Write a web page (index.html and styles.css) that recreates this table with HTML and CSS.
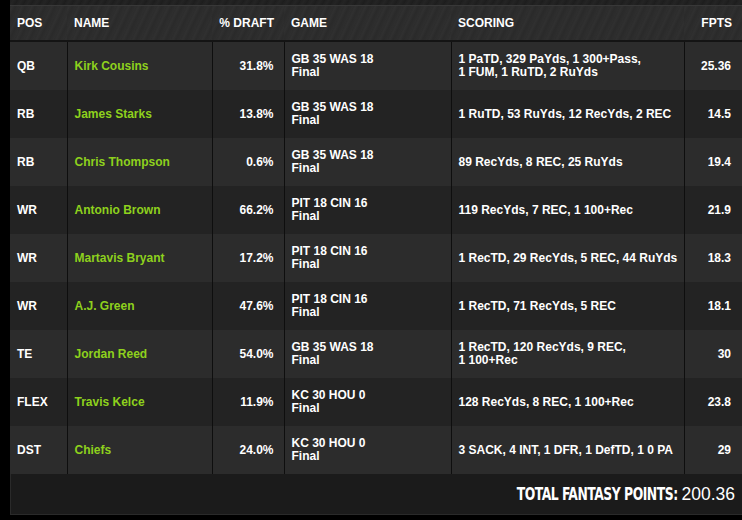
FILE: index.html
```html
<!DOCTYPE html>
<html lang="en">
<head>
    <meta charset="UTF-8">
    <title>Lineup Results</title>
    <link rel="stylesheet" href="styles.css">
</head>
<body>

    <div class="panel">
        <div class="panel-top"></div>
        <table class="lineup">
            <colgroup>
                <col class="col-pos">
                <col class="col-name">
                <col class="col-draft">
                <col class="col-game">
                <col class="col-scoring">
                <col class="col-fpts">
            </colgroup>
            <thead>
                <tr>
                    <th>POS</th>
                    <th>NAME</th>
                    <th class="num">% DRAFT</th>
                    <th>GAME</th>
                    <th>SCORING</th>
                    <th class="num">FPTS</th>
                </tr>
            </thead>
            <tbody>
                <tr>
                    <td>QB</td>
                    <td class="player">Kirk Cousins</td>
                    <td class="num">31.8%</td>
                    <td>GB 35 WAS 18<br>Final</td>
                    <td>1 PaTD, 329 PaYds, 1 300+Pass,<br>1 FUM, 1 RuTD, 2 RuYds</td>
                    <td class="num">25.36</td>
                </tr>
                <tr>
                    <td>RB</td>
                    <td class="player">James Starks</td>
                    <td class="num">13.8%</td>
                    <td>GB 35 WAS 18<br>Final</td>
                    <td>1 RuTD, 53 RuYds, 12 RecYds, 2 REC</td>
                    <td class="num">14.5</td>
                </tr>
                <tr>
                    <td>RB</td>
                    <td class="player">Chris Thompson</td>
                    <td class="num">0.6%</td>
                    <td>GB 35 WAS 18<br>Final</td>
                    <td>89 RecYds, 8 REC, 25 RuYds</td>
                    <td class="num">19.4</td>
                </tr>
                <tr>
                    <td>WR</td>
                    <td class="player">Antonio Brown</td>
                    <td class="num">66.2%</td>
                    <td>PIT 18 CIN 16<br>Final</td>
                    <td>119 RecYds, 7 REC, 1 100+Rec</td>
                    <td class="num">21.9</td>
                </tr>
                <tr>
                    <td>WR</td>
                    <td class="player">Martavis Bryant</td>
                    <td class="num">17.2%</td>
                    <td>PIT 18 CIN 16<br>Final</td>
                    <td>1 RecTD, 29 RecYds, 5 REC, 44 RuYds</td>
                    <td class="num">18.3</td>
                </tr>
                <tr>
                    <td>WR</td>
                    <td class="player">A.J. Green</td>
                    <td class="num">47.6%</td>
                    <td>PIT 18 CIN 16<br>Final</td>
                    <td>1 RecTD, 71 RecYds, 5 REC</td>
                    <td class="num">18.1</td>
                </tr>
                <tr>
                    <td>TE</td>
                    <td class="player">Jordan Reed</td>
                    <td class="num">54.0%</td>
                    <td>GB 35 WAS 18<br>Final</td>
                    <td>1 RecTD, 120 RecYds, 9 REC,<br>1 100+Rec</td>
                    <td class="num">30</td>
                </tr>
                <tr>
                    <td>FLEX</td>
                    <td class="player">Travis Kelce</td>
                    <td class="num">11.9%</td>
                    <td>KC 30 HOU 0<br>Final</td>
                    <td>128 RecYds, 8 REC, 1 100+Rec</td>
                    <td class="num">23.8</td>
                </tr>
                <tr>
                    <td>DST</td>
                    <td class="player">Chiefs</td>
                    <td class="num">24.0%</td>
                    <td>KC 30 HOU 0<br>Final</td>
                    <td>3 SACK, 4 INT, 1 DFR, 1 DefTD, 1 0 PA</td>
                    <td class="num">29</td>
                </tr>
            </tbody>
        </table>
        <div class="total">
            <span class="total-label">TOTAL FANTASY POINTS:</span>
            <span class="total-value">200.36</span>
        </div>
    </div>

</body>
</html>
```

FILE: styles.css
```css
body {
    margin: 0;
    background: #000;
    color: #fff;
    font-family: "Liberation Sans", Arial, sans-serif;
    font-size: 12px;
    overflow: hidden;
}
.panel {
    margin-left: 10px;
    width: 740px;
}
.panel-top {
    height: 5px;
    background: repeating-linear-gradient(120deg, #1f1f1f 0px, #242424 3px, #1d1d1d 7px);
    border-bottom: 1px solid #383838;
}
.lineup {
    width: 740px;
    border-collapse: collapse;
    table-layout: fixed;
}
.col-pos { width: 57px; }
.col-name { width: 145px; }
.col-draft { width: 72px; }
.col-game { width: 167px; }
.col-scoring { width: 233px; }
.col-fpts { width: 66px; }
th {
    height: 34px;
    padding: 0 7px;
    text-align: left;
    font-weight: bold;
    font-size: 12px;
    background: repeating-linear-gradient(115deg, #2c2c2c 0px, #303030 2px, #2a2a2a 5px, #2e2e2e 9px);
    border-bottom: 2px solid #141414;
}
td {
    height: 48px;
    padding: 0 6px 0 7px;
    font-weight: bold;
    line-height: 13px;
    border-left: 1px solid #0e0e0e;
    vertical-align: middle;
}
td:first-child {
    border-left: none;
}
tbody tr:nth-child(odd) {
    background: #2c2c2c;
}
tbody tr:nth-child(even) {
    background: #232323;
}
.num {
    text-align: right;
    padding-right: 10px;
}
th.num:last-child {
    padding-right: 18px;
}
td.num:last-child {
    padding-right: 19px;
}
.player {
    color: #8ed11d;
}
.total {
    height: 40px;
    background: #1b1b1b;
    border-left: 1px solid #2a2a2a;
    border-bottom: 1px solid #2a2a2a;
    display: flex;
    justify-content: flex-end;
    align-items: center;
    gap: 4px;
    padding-right: 15px;
}
.total-label {
    font-family: "Liberation Sans Narrow", "DejaVu Sans Condensed", sans-serif;
    font-weight: bold;
    font-size: 17px;
    letter-spacing: -0.6px;
    transform: scaleX(0.81);
    transform-origin: right center;
}
.total-value {
    font-size: 17.5px;
}
```
